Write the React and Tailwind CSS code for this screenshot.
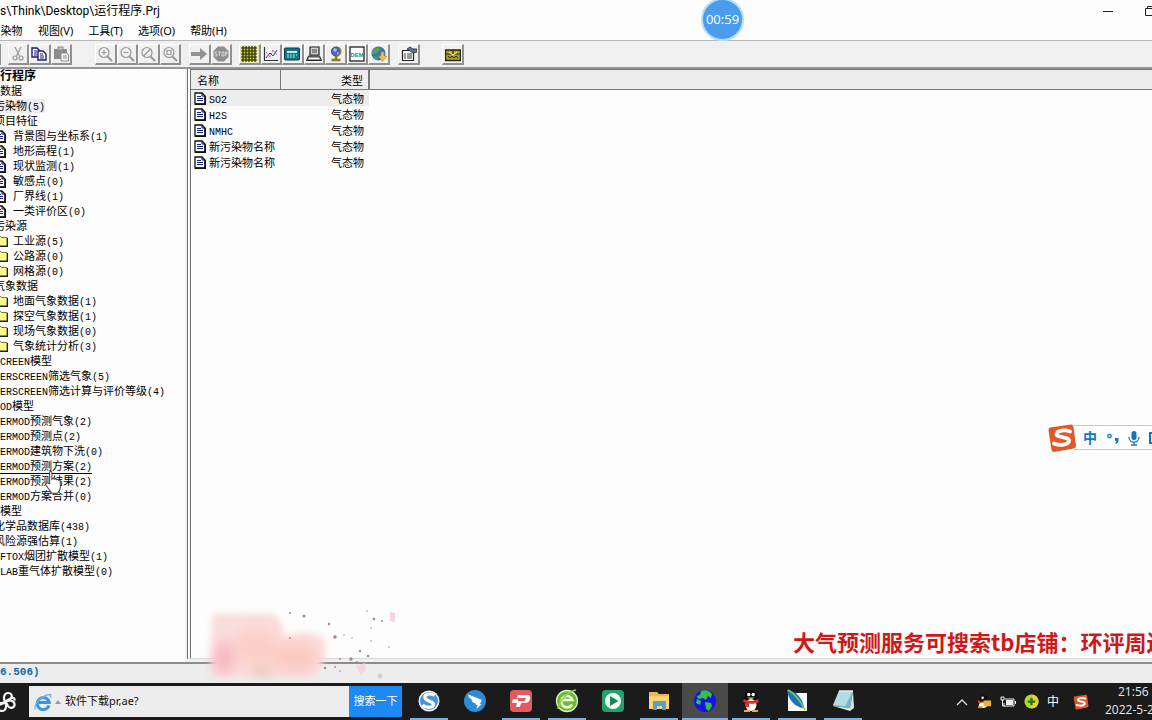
import React, { useState } from 'react';

const treeItems = [
  { text: '行程序', kind: 'root' },
  { text: '数据', kind: 'plain' },
  { text: '污染物(5)', kind: 'cut', current: true },
  { text: '项目特征', kind: 'cut' },
  { text: '背景图与坐标系(1)', kind: 'doc' },
  { text: '地形高程(1)', kind: 'doc' },
  { text: '现状监测(1)', kind: 'doc' },
  { text: '敏感点(0)', kind: 'doc' },
  { text: '厂界线(1)', kind: 'doc' },
  { text: '一类评价区(0)', kind: 'doc' },
  { text: '污染源', kind: 'cut' },
  { text: '工业源(5)', kind: 'folder' },
  { text: '公路源(0)', kind: 'folder' },
  { text: '网格源(0)', kind: 'folder' },
  { text: '气象数据', kind: 'cut' },
  { text: '地面气象数据(1)', kind: 'folder' },
  { text: '探空气象数据(1)', kind: 'folder' },
  { text: '现场气象数据(0)', kind: 'folder' },
  { text: '气象统计分析(3)', kind: 'folder' },
  { text: 'CREEN模型', kind: 'plain' },
  { text: 'ERSCREEN筛选气象(5)', kind: 'plain' },
  { text: 'ERSCREEN筛选计算与评价等级(4)', kind: 'plain' },
  { text: 'OD模型', kind: 'plain' },
  { text: 'ERMOD预测气象(2)', kind: 'plain' },
  { text: 'ERMOD预测点(2)', kind: 'plain' },
  { text: 'ERMOD建筑物下洗(0)', kind: 'plain' },
  { text: 'ERMOD预测方案(2)', kind: 'plain', hot: true },
  { text: 'ERMOD预测结果(2)', kind: 'plain' },
  { text: 'ERMOD方案合并(0)', kind: 'plain' },
  { text: '模型', kind: 'plain' },
  { text: '化学品数据库(438)', kind: 'cut' },
  { text: '风险源强估算(1)', kind: 'cut' },
  { text: 'FTOX烟团扩散模型(1)', kind: 'plain' },
  { text: 'LAB重气体扩散模型(0)', kind: 'plain' },
];

const pollutants = [
  { name: 'SO2', type: '气态物' },
  { name: 'H2S', type: '气态物' },
  { name: 'NMHC', type: '气态物' },
  { name: '新污染物名称', type: '气态物' },
  { name: '新污染物名称', type: '气态物' },
];

// Latin letters and digits are half as wide as the Chinese characters
const Label = ({ text }) =>
  text.split(/([A-Z()\d]+)/).map((part, i) =>
    /^[A-Z()\d]/.test(part) ? (
      <span key={i} className="font-['Liberation_Mono',monospace] text-[10px] leading-none">{part}</span>
    ) : (
      part
    )
  );

const DocIcon = () => (
  <svg width="12" height="13" viewBox="0 0 12 13" className="shrink-0">
    <path d="M1 1h7l3 3v8H1z" fill="#fff" stroke="#111" strokeWidth="1.3" />
    <path d="M11.200 4v8.300H1" fill="none" stroke="#111" strokeWidth="1.6" />
    <path d="M8 1v3h3" fill="none" stroke="#111" />
    <path d="M3 4.500h4M3 6.500h6M3 8.500h6" stroke="#20207c" strokeWidth="1.2" />
  </svg>
);

const FolderIcon = () => (
  <svg width="14" height="12" viewBox="0 0 14 12" className="shrink-0">
    <path d="M1 11V2.5L2.5 1H6l1.5 1.5H13V11z" fill="#fbf88c" stroke="#77752e" />
    <path d="M1.5 11.3h12V3" fill="none" stroke="#222" strokeWidth="1.2" />
  </svg>
);

const TreeRow = ({ item }) => {
  const icon = item.kind === 'doc' || item.kind === 'folder';
  return (
    <li className="h-[15px] flex">
      <button
        className={`flex items-start h-[15px] whitespace-nowrap text-left ${
          item.kind === 'root' ? 'text-[12px] font-bold' : 'text-[11px]'
        } ${icon || item.kind === 'cut' ? '-ml-[6px]' : ''}`}
      >
        {icon && <span className="w-[19px] h-[14px] flex items-center">{item.kind === 'doc' ? <DocIcon /> : <FolderIcon />}</span>}
        <span className={`leading-[12px] ${item.hot ? 'border-b border-black' : ''} ${item.current ? 'bg-[#ededed]' : ''}`}>
          <Label text={item.text} />
        </span>
      </button>
    </li>
  );
};

const ToolButton = ({ label, children, tint }) => (
  <button
    aria-label={label}
    className={`h-[21px] flex items-center justify-center border-t border-l border-t-white border-l-white border-r-2 border-b-2 border-r-[#909090] border-b-[#909090] ${
      tint ? 'bg-[#e6e6b8]' : 'bg-[#f0f0f0]'
    }`}
  >
    <svg width="16" height="16" viewBox="0 0 16 16" fill="none">
      {children}
    </svg>
  </button>
);

const Lens = ({ children }) => (
  <g stroke="#999" strokeWidth="1.2">
    <circle cx="7" cy="6.5" r="5" />
    <path d="M10.500 10.500l4.500 4.500" strokeWidth="2" />
    {children}
  </g>
);

const Toolbar = () => (
  <div className="h-[27px] shrink-0 bg-[#f0f0f0] border-t border-[#b8b8b8] pt-[3px] flex">
    <div className="w-[8px] border-l border-[#909090] h-[21px]" />
    <div className="w-[64px] grid grid-cols-3">
      <ToolButton label="剪切">
        <path d="M5 1l4.500 9M11 1L6.500 10" stroke="#999" strokeWidth="1.2" />
        <circle cx="5" cy="12" r="2" stroke="#999" strokeWidth="1.2" />
        <circle cx="11" cy="12" r="2" stroke="#999" strokeWidth="1.2" />
      </ToolButton>
      <ToolButton label="复制">
        <path d="M1 2h5l3 3v6H1z" fill="#fff" stroke="#1b1b74" strokeWidth="1.4" />
        <path d="M3 5h3M3 7h3M3 9h3" stroke="#1b1b74" />
        <path d="M7 5h5l3 3v6H7z" fill="#fff" stroke="#1b1b74" strokeWidth="1.4" />
        <path d="M9 8h3M9 10h4M9 12h4" stroke="#1b1b74" />
      </ToolButton>
      <ToolButton label="粘贴">
        <path d="M1 3h13v10H1z" fill="#8c8c8c" />
        <path d="M5 1h5v3H5z" fill="#c4c4c4" stroke="#8c8c8c" />
        <path d="M8 7h6l1.500 2v6H8z" fill="#f4f4f4" stroke="#8c8c8c" />
        <path d="M10 10h4M10 12h4" stroke="#8c8c8c" />
      </ToolButton>
    </div>
    <div className="w-[86px] ml-[23px] grid grid-cols-4">
      <ToolButton label="放大"><Lens><path d="M4.500 6.500h5M7 4v5" /></Lens></ToolButton>
      <ToolButton label="缩小"><Lens><path d="M4.500 6.500h5" /></Lens></ToolButton>
      <ToolButton label="还原"><Lens><path d="M3.500 10l7-7" /></Lens></ToolButton>
      <ToolButton label="全图"><Lens><path d="M5 4.500h4v4H5z" /></Lens></ToolButton>
    </div>
    <div className="w-[43px] ml-[8px] grid grid-cols-2">
      <ToolButton label="运行">
        <path d="M0 6h9V2l7 6-7 6v-4H0z" fill="#929292" />
      </ToolButton>
      <ToolButton label="停止">
        <path d="M5 0.500h6L15.500 5v6L11 15.500H5L0.500 11V5z" fill="#8f8f8f" />
        <path d="M4 6H2v2h2v2H2M5 6h3M6.500 6v4M9 6h2v4H9zM12.500 10V6H14v2h-1.500" stroke="#e0e0e0" strokeWidth="0.8" />
      </ToolButton>
    </div>
    <div className="w-[151px] ml-[7px] grid grid-cols-7">
      <ToolButton label="网格" tint>
        <path d="M1 1h14v14H1z" fill="#c8c440" />
        <path d="M2 0v16M5 0v16M8 0v16M11 0v16M14 0v16M0 2h16M0 5h16M0 8h16M0 11h16M0 14h16" stroke="#26260a" strokeWidth="1.1" />
      </ToolButton>
      <ToolButton label="图表">
        <path d="M1.500 1v13.500H15" stroke="#333" strokeWidth="1.2" />
        <path d="M3 12l4-5 3 3 4-6" stroke="#3434a0" />
        <path d="M3 6l4 5 3-7 4 5" stroke="#b06a8a" strokeDasharray="2 1" />
      </ToolButton>
      <ToolButton label="数据表">
        <rect x="0.500" y="2" width="15" height="12" rx="1" fill="#127584" stroke="#0a3a44" />
        <path d="M3 5h10v2H3z" fill="#b8eef0" />
        <path d="M3 9h2M6 9h2M9 9h2M3 11h2M6 11h2M9 11h2M12 9h1" stroke="#b8eef0" />
      </ToolButton>
      <ToolButton label="计算机">
        <path d="M4 1h9v8H4z" fill="#d0d0d0" stroke="#222" strokeWidth="1.200" />
        <path d="M6 3h5v4H6z" fill="#888" />
        <path d="M2.500 10h11L15.500 14.500H0.500z" fill="#999" stroke="#222" />
        <path d="M3 12.500h10" stroke="#fff" />
      </ToolButton>
      <ToolButton label="地球仪">
        <circle cx="8" cy="5.500" r="4.500" fill="#4668c8" stroke="#3b3b58" />
        <path d="M6 2l3 1-1 3-3-1zM9 6l2 1-2 2z" fill="#a4bcdc" />
        <path d="M11 1.500c4 4 1 9-4 9" stroke="#9c8e1c" strokeWidth="1.500" />
        <path d="M8 10v3M3.500 14h9" stroke="#8b7d12" strokeWidth="2.400" />
      </ToolButton>
      <ToolButton label="DEM">
        <rect x="1" y="1" width="14" height="14" fill="#fff" stroke="#222" strokeWidth="1.300" />
        <text x="8" y="11" textAnchor="middle" fontSize="6" fontWeight="bold" fontFamily="Liberation Sans, sans-serif" fill="#0b8c84">DEM</text>
      </ToolButton>
      <ToolButton label="下载地图">
        <circle cx="7.500" cy="7.500" r="7" fill="#2f78bc" />
        <path d="M3 2.500l5-1 1 3-4 3-3 1-1-2zM3 10l3 1 1 3-3-1z" fill="#59a34a" />
        <path d="M10 6h3v4h3l-4.500 5.500L7.500 10H10z" fill="#f4bc48" stroke="#c98618" strokeWidth="0.600" />
      </ToolButton>
    </div>
    <div className="w-[22px] ml-[8px] grid">
      <ToolButton label="属性">
        <path d="M1.500 4.500h11v10h-11z" fill="#fff" stroke="#222" strokeWidth="1.200" />
        <path d="M3 8h2M6 8h5M3 10h2M6 10h5M3 12h2M6 12h5" stroke="#333" />
        <path d="M6 3l3-2 3 2h4v3l-4 1-3-2z" fill="#6474a4" stroke="#222" strokeWidth="0.800" />
      </ToolButton>
    </div>
    <div className="w-[22px] ml-[22px] grid">
      <ToolButton label="打包">
        <path d="M0.500 4h15v10.500h-15z" fill="#a8a028" stroke="#28260a" strokeWidth="1.300" />
        <path d="M1 8h14M8 4v5M3 10l2 2 2-2 2 2 2-2 2 2" stroke="#28260a" />
        <path d="M4 6l4 3 4-3" stroke="#eee85c" strokeWidth="1.200" />
      </ToolButton>
    </div>
  </div>
);

const TaskButton = ({ label, open, active, children }) => (
  <button
    aria-label={label}
    className={`w-[46px] h-full flex flex-col items-center shrink-0 ${active ? 'bg-[#4a4a4a]' : ''}`}
  >
    <span className="flex-1 flex items-center">
      <svg width="24" height="24" viewBox="0 0 24 24" fill="none">{children}</svg>
    </span>
    <span className={`h-[2px] ${active ? 'w-full' : 'w-[38px]'} ${open ? 'bg-[#76b0e6]' : ''}`} />
  </button>
);

const SogouMark = ({ size }) => (
  <svg width={size} height={size} viewBox="0 0 30 30" fill="none">
    <path d="M3 4.500L24 1.500q2 0 2.400 2L29 23q0 2-2 2.500L7 29q-2 0-2.500-2L1.500 7q0-2 1.500-2.500z" fill="#e0582a" />
    <path d="M23 8.500c-5-2-13-1-13.500 2.500-.5 4 13 2 12.500 7-.6 4-9 5-15 2.500" stroke="#fff" strokeWidth="3.800" strokeLinecap="round" />
  </svg>
);

const Taskbar = () => {
  const [query, setQuery] = useState('软件下载pr,ae?');
  return (
    <footer className="h-[37px] shrink-0 bg-[#1c1b1b] flex items-stretch text-white">
      <button aria-label="开始" className="w-[29px] flex items-center shrink-0">
        <svg width="16" height="22" viewBox="0 0 16 22" fill="none" stroke="#f2f2f2" strokeWidth="2.200">
          <path d="M5 11C3 7 4 2 8 2s5 4 2 6c-2 1-4 1-5 3zM5 11c4-2 9-2 9.500 2S10 18 8 15c-1-2-1-3-3-4zM5 11c2 4 1 9-3 9s-6-4-3-6c2-1 5-1 6-3zM5 11c-4 2-9 1-9-3" />
          <path d="M10 8c3-2 5-1 4.500 1.500" />
        </svg>
      </button>
      <form className="w-[373px] shrink-0 my-[3px] flex bg-[#ededed]" onSubmit={(e) => e.preventDefault()}>
        <span className="w-[36px] flex items-center pl-[5px] gap-[3px] shrink-0">
          <svg width="18" height="18" viewBox="0 0 18 18" fill="none">
            <path d="M15 12.500A6 6 0 1 1 15.200 9.500H5" stroke="#3a92e4" strokeWidth="3" />
            <path d="M1.500 16.500C-1 12 8 2 16 1.500c1.500.3 1 2 .5 3" stroke="#6cb8f2" strokeWidth="1.300" />
          </svg>
          <svg width="6" height="4" viewBox="0 0 6 4"><path d="M3 0l3 4H0z" fill="#999" /></svg>
        </span>
        <input
          aria-label="搜索"
          value={query}
          onChange={(e) => setQuery(e.target.value)}
          className="flex-1 min-w-0 bg-transparent text-[#111] text-[11px] outline-none"
        />
        <button className="w-[53px] bg-[#1e88f4] text-[11px] whitespace-nowrap">搜索一下</button>
      </form>
      <nav className="flex ml-[4px]">
        <TaskButton label="搜狗浏览器" open>
          <circle cx="12" cy="12" r="10.500" fill="#eef5fc" />
          <circle cx="12" cy="12" r="9" fill="#4b92dc" />
          <path d="M17.500 6.500C13 3.500 7 5.500 8 9s9 3 8.500 6.500S9 19.500 5.500 16" stroke="#fff" strokeWidth="3.200" />
        </TaskButton>
        <TaskButton label="钉钉">
          <circle cx="12" cy="12" r="11" fill="#2c8cd8" />
          <path d="M5 5.500l13 5c1 .5.500 2-.5 3.500l-1 1h2l-5 5 1-4h-2l.500-1.500c-3-.5-4-2-4.500-3.500l3 .5C8 10.500 5.500 9 5 5.500z" fill="#fff" />
        </TaskButton>
        <TaskButton label="PDF" open>
          <rect x="1" y="1" width="22" height="22" rx="4" fill="#df5c5f" />
          <path d="M9 6h9q4 0 3 4t-5 4h-4l-1 4H7l1-4H3l1-4h5v2h7l1-3H8z" fill="#fff" />
        </TaskButton>
        <TaskButton label="360浏览器" open>
          <circle cx="12" cy="12" r="10.500" fill="#6eb93a" stroke="#d8edc4" strokeWidth="1.300" />
          <path d="M17 15.500A5.700 5.700 0 1 1 17.500 11H7" stroke="#e8f8d8" strokeWidth="2.600" />
          <path d="M3 20C4 12 12 3 21 1" stroke="#94d04d" strokeWidth="1.500" />
        </TaskButton>
        <TaskButton label="播放器">
          <rect x="1" y="1" width="22" height="22" rx="4" fill="#21a36a" />
          <circle cx="12" cy="12" r="8" fill="#f4fbf7" />
          <path d="M9 7l8.500 5L9 17z" fill="#168a55" />
        </TaskButton>
        <TaskButton label="文件资源管理器" open>
          <path d="M2 3h8l2 2h10v15H2z" fill="#eab84e" />
          <path d="M2 7h20v13H2z" fill="#f8d476" />
          <path d="M6 21v-9h13v9h-4v-4h-5v4z" fill="#58a0c8" />
        </TaskButton>
        <TaskButton label="大气预测" open active>
          <circle cx="12" cy="12" r="11" fill="#1414e8" />
          <path d="M8 2c4-2 9 0 11 3l-1 4-3-2-2 4-3-2-5 1-1-3 3-1zM4 10l4 2-1 4-4-2zM12 13l6 1 1 3-3 5-3-2z" fill="#35c044" />
        </TaskButton>
        <TaskButton label="QQ" open>
          <ellipse cx="12" cy="14" rx="8" ry="8" fill="#121212" />
          <circle cx="12" cy="7.500" r="6.500" fill="#0c0c0c" />
          <ellipse cx="12" cy="16" rx="5.500" ry="6" fill="#fff" />
          <circle cx="9.800" cy="5.500" r="1.700" fill="#fff" />
          <circle cx="14.200" cy="5.500" r="1.700" fill="#fff" />
          <path d="M8 8.500h8l-4 2z" fill="#f2a62a" />
          <path d="M5 10c4 2.500 10 2.500 14 0l1 3c-4 2-8 2-10 1.500V18H7v-4l-3-1z" fill="#d62e2e" />
          <path d="M5 21h6v2H5zM13 21h6v2h-6z" fill="#ecab32" />
        </TaskButton>
        <TaskButton label="画笔" open>
          <rect x="3" y="4" width="19" height="18" fill="#fafafa" />
          <path d="M2 1c8 0 16 8 17 18-8 0-16-8-17-18z" fill="#1874c0" />
          <path d="M3 1c7 4 12 10 17 20" stroke="#7cc64e" strokeWidth="1.500" />
        </TaskButton>
        <TaskButton label="记事本" open>
          <path d="M8 2h14l-3 17-17-2z" fill="#7db6c4" />
          <path d="M8 2h14l-8 15-12-1z" fill="#b2dce4" />
          <path d="M2 17l17 2 3-17 1 17-4 3z" fill="#d8e4e6" />
          <path d="M8 2h14" stroke="#eee" strokeWidth="1.500" />
        </TaskButton>
      </nav>
      <div className="ml-auto flex items-center">
        <div className="flex items-center gap-[8px] mr-[16px]">
          <button aria-label="显示隐藏的图标" className="w-[14px]">
            <svg width="14" height="10" viewBox="0 0 14 10" fill="none"><path d="M2 8l5-5 5 5" stroke="#ddd" strokeWidth="1.300" /></svg>
          </button>
          <svg width="15" height="15" viewBox="0 0 16 16">
            <ellipse cx="7" cy="6" rx="4" ry="5.500" fill="#111" />
            <circle cx="6" cy="4" r="1.300" fill="#fff" />
            <path d="M1 6c4 3 6 3 9 1v3c-3 2-7 1-9-1z" fill="#d34230" />
            <ellipse cx="6" cy="12" rx="4" ry="3" fill="#fff" />
            <path d="M7 7h8v6h-4l-2 2v-2H7z" fill="#f0b040" />
            <path d="M1 13h5v2H1z" fill="#e58a28" />
          </svg>
          <svg width="16" height="12" viewBox="0 0 16 12" fill="none">
            <path d="M5 3h9v7H4V7" stroke="#eee" />
            <path d="M6 4h7v5H6zM15 5h1v3h-1z" fill="#eee" />
            <path d="M1 1h3v3H1zM2.500 4v6H5" stroke="#eee" />
          </svg>
          <svg width="15" height="15" viewBox="0 0 16 16">
            <circle cx="8" cy="8" r="7.500" fill="#b6d820" />
            <path d="M8 .5a7.500 7.500 0 0 1 0 15z" fill="#f0cf30" />
            <path d="M6.800 4h2.400v2.800H12v2.400H9.200V12H6.800V9.200H4V6.800h2.800z" fill="#187a22" />
          </svg>
          <span className="w-[14px] text-[12px] leading-[16px]">中</span>
          <span className="ml-[4px]"><SogouMark size={16} /></span>
        </div>
        <div className="w-[47px] pb-[2px] text-[12px] leading-[18px] whitespace-nowrap font-['Open_Sans',sans-serif] text-[#e8e8e8] overflow-hidden">
          <div className="pl-[13px]">21:56</div>
          <div>2022-5-2</div>
        </div>
      </div>
    </footer>
  );
};

// Floating input-method bar
const ImeBar = () => (
  <div className="absolute right-0 top-[423px] w-[105px] h-[29px] flex items-center">
    <div className="z-10 shrink-0"><SogouMark size={30} /></div>
    <div className="-ml-[3px] flex-1 h-[25px] bg-white border-y border-[#c4ccd2] flex items-center text-[#1474c4] overflow-hidden">
      <span className="w-[15px] ml-[9px] shrink-0 text-[14px] leading-[20px] font-bold">中</span>
      <svg width="14" height="14" viewBox="0 0 14 14" className="ml-[8px] shrink-0" fill="none">
        <circle cx="3.500" cy="5" r="1.700" stroke="#1474c4" strokeWidth="1.300" />
        <path d="M9 7h3.500v3q-.5 2.500-3 3v-1.500l1-1.500H9z" fill="#1474c4" />
      </svg>
      <svg width="14" height="16" viewBox="0 0 14 16" className="ml-[7px] shrink-0" fill="none">
        <rect x="4.500" y="1" width="5" height="9" rx="2.500" fill="#1474c4" />
        <path d="M2 7c0 7 10 7 10 0M7 12v3M4 15h6" stroke="#1474c4" strokeWidth="1.300" />
      </svg>
      <span className="w-[8px] h-[12px] ml-[8px] border-2 border-[#1474c4] shrink-0" />
    </div>
  </div>
);

// Blurred pink corner mark with scattered specks
const PinkMark = () => (
  <svg width="200" height="76" viewBox="0 0 200 76" className="absolute left-[204px] top-[606px] pointer-events-none">
    <defs>
      <filter id="soft" x="-10%" y="-10%" width="120%" height="120%">
        <feGaussianBlur stdDeviation="3" />
      </filter>
      <filter id="softer" x="-30%" y="-30%" width="160%" height="160%">
        <feGaussianBlur stdDeviation="7" />
      </filter>
    </defs>
    <path d="M8 8h62q8 6 10 22l20-4 18 4q6 10 2 22l-8 18H8z" fill="#fbdcdc" filter="url(#soft)" />
    <g filter="url(#softer)">
      <ellipse cx="20" cy="52" rx="10" ry="16" fill="#f8b4be" />
      <ellipse cx="92" cy="52" rx="22" ry="14" fill="#fbc8c2" />
      <ellipse cx="52" cy="40" rx="22" ry="18" fill="#fbcfc8" />
      <ellipse cx="58" cy="66" rx="12" ry="4" fill="#dcc0b0" />
    </g>
    <g fill="#a8848c">
      <circle cx="86" cy="7" r="1" /><circle cx="100" cy="10" r="1.500" /><circle cx="125" cy="18" r="1.200" />
      <circle cx="131" cy="31" r="1.800" /><circle cx="140" cy="29" r="0.800" /><circle cx="148" cy="32" r="0.700" />
      <circle cx="170" cy="13" r="1.300" /><circle cx="178" cy="15" r="1" /><circle cx="163" cy="5" r="0.800" />
      <circle cx="167" cy="22" r="0.800" /><circle cx="167" cy="35" r="0.800" /><circle cx="185" cy="41" r="0.800" />
      <circle cx="156" cy="45" r="1.200" /><circle cx="164" cy="50" r="1.300" /><circle cx="147" cy="53" r="1.700" />
      <circle cx="153" cy="56" r="1" /><circle cx="136" cy="53" r="1" /><circle cx="121" cy="62" r="1.200" />
      <circle cx="131" cy="61" r="0.900" /><circle cx="136" cy="65" r="0.800" /><circle cx="86" cy="32" r="0.900" />
    </g>
    <path d="M186 6l5 1v9l-5-1zM152 60l9-3 1 7-5 5z" fill="#f6d4dc" />
    <circle cx="176" cy="70" r="2.500" fill="#dccbcd" />
  </svg>
);

export default function App() {
  return (
    <div className="relative min-h-screen flex flex-col overflow-hidden bg-[#fdfdfd] text-black font-['Noto_Sans','Noto_Sans_CJK_SC',sans-serif]">
      <header className="h-[22px] shrink-0 flex items-center justify-between">
        <h1 className="text-[12px] leading-[20px] font-['Roboto','Noto_Sans_CJK_SC',sans-serif] whitespace-nowrap">
          s\Think\Desktop\运行程序.Prj
        </h1>
        <div className="flex items-center">
          <button aria-label="最小化" className="w-[42px]">
            <svg width="10" height="10" viewBox="0 0 10 10"><path d="M0 5.500h10" stroke="#222" /></svg>
          </button>
          <button aria-label="还原" className="w-[7px] overflow-hidden">
            <svg width="10" height="10" viewBox="0 0 10 10" fill="none" className="max-w-none"><path d="M.5 2.500h7v7h-7zM2.500 2V.5h7v7H8" stroke="#222" /></svg>
          </button>
        </div>
      </header>
      <nav className="h-[18px] shrink-0 flex items-center gap-[15px] text-[11px] leading-[16px] whitespace-nowrap">
        <button className="w-[23px]">染物</button>
        <button>视图(V)</button>
        <button>工具(T)</button>
        <button>选项(O)</button>
        <button>帮助(H)</button>
      </nav>
      <Toolbar />

      <main className="flex-1 flex border-t-2 border-[#969696] bg-[#f0f0f0]">
        <aside className="w-[185px] shrink-0 bg-[#fdfdfd] overflow-hidden font-['Noto_Sans_CJK_SC',sans-serif]">
          <ul>
            {treeItems.map((item, i) => (
              <TreeRow key={i} item={item} />
            ))}
          </ul>
        </aside>
        <section className="flex-1 ml-[2px] mb-[3px] bg-[#fdfdfd] border-l-4 border-double border-[#707070] border-b border-b-[#d8d8d8] font-['Noto_Sans_CJK_SC',sans-serif]">
          <div className="h-[21px] bg-[#ededed] border-y border-[#777]">
            <table className="w-[179px] table-fixed border-collapse text-[11px] leading-[16px]">
              <thead>
                <tr className="h-[20px]">
                  <th className="w-[89px] pl-[6px] text-left font-normal border-r border-[#777]">名称</th>
                  <th className="pr-[5px] text-right font-normal border-r-2 border-[#777]">类型</th>
                </tr>
              </thead>
              <tbody>
                {pollutants.map((p, i) => (
                  <tr key={i} className={`h-[16px] ${i === 0 ? 'bg-[#ededed]' : ''}`}>
                    <td className="p-0">
                      <span className="flex items-center gap-[3px] pl-[3px] h-[16px] whitespace-nowrap">
                        <DocIcon />
                        <span><Label text={p.name} /></span>
                      </span>
                    </td>
                    <td className="p-0 pr-[5px] text-right">{p.type}</td>
                  </tr>
                ))}
              </tbody>
            </table>
          </div>
        </section>
      </main>

      <div className="h-[21px] shrink-0 bg-[#ededed] border-t-2 border-[#8c8c8c] text-[#1468a8] text-[11px] leading-[17px] font-bold font-['Liberation_Mono',monospace]">
        6.506)
      </div>
      <Taskbar />

      <div className="absolute left-[701px] -top-[2px] w-[43px] h-[43px] rounded-full border-2 border-[#b8dcf8] bg-[#4a9cec] text-white text-[13px] leading-[39px] text-center font-['Open_Sans',sans-serif]">
        00:59
      </div>
      <ImeBar />
      <PinkMark />
      <p className="absolute left-[793px] right-0 top-[625px] overflow-hidden whitespace-nowrap text-[22px] leading-[32px] font-bold text-[#d01818] font-['Noto_Sans_CJK_SC',sans-serif]">
        大气预测服务可搜索tb店铺：环评周边
      </p>
      <svg width="18" height="25" viewBox="0 0 16 22" className="absolute left-[44px] top-[470px] pointer-events-none">
        <path d="M5 12V2q1-2 2 0v6q1-1.500 2 0 1-1 2 .5 1-1 2 .5 1-.5 1.500.5v6q0 3-2.500 5H7L1.500 13q0-2 1.500-1.500z" fill="#fff" stroke="#444" strokeWidth="0.900" />
      </svg>
    </div>
  );
}
